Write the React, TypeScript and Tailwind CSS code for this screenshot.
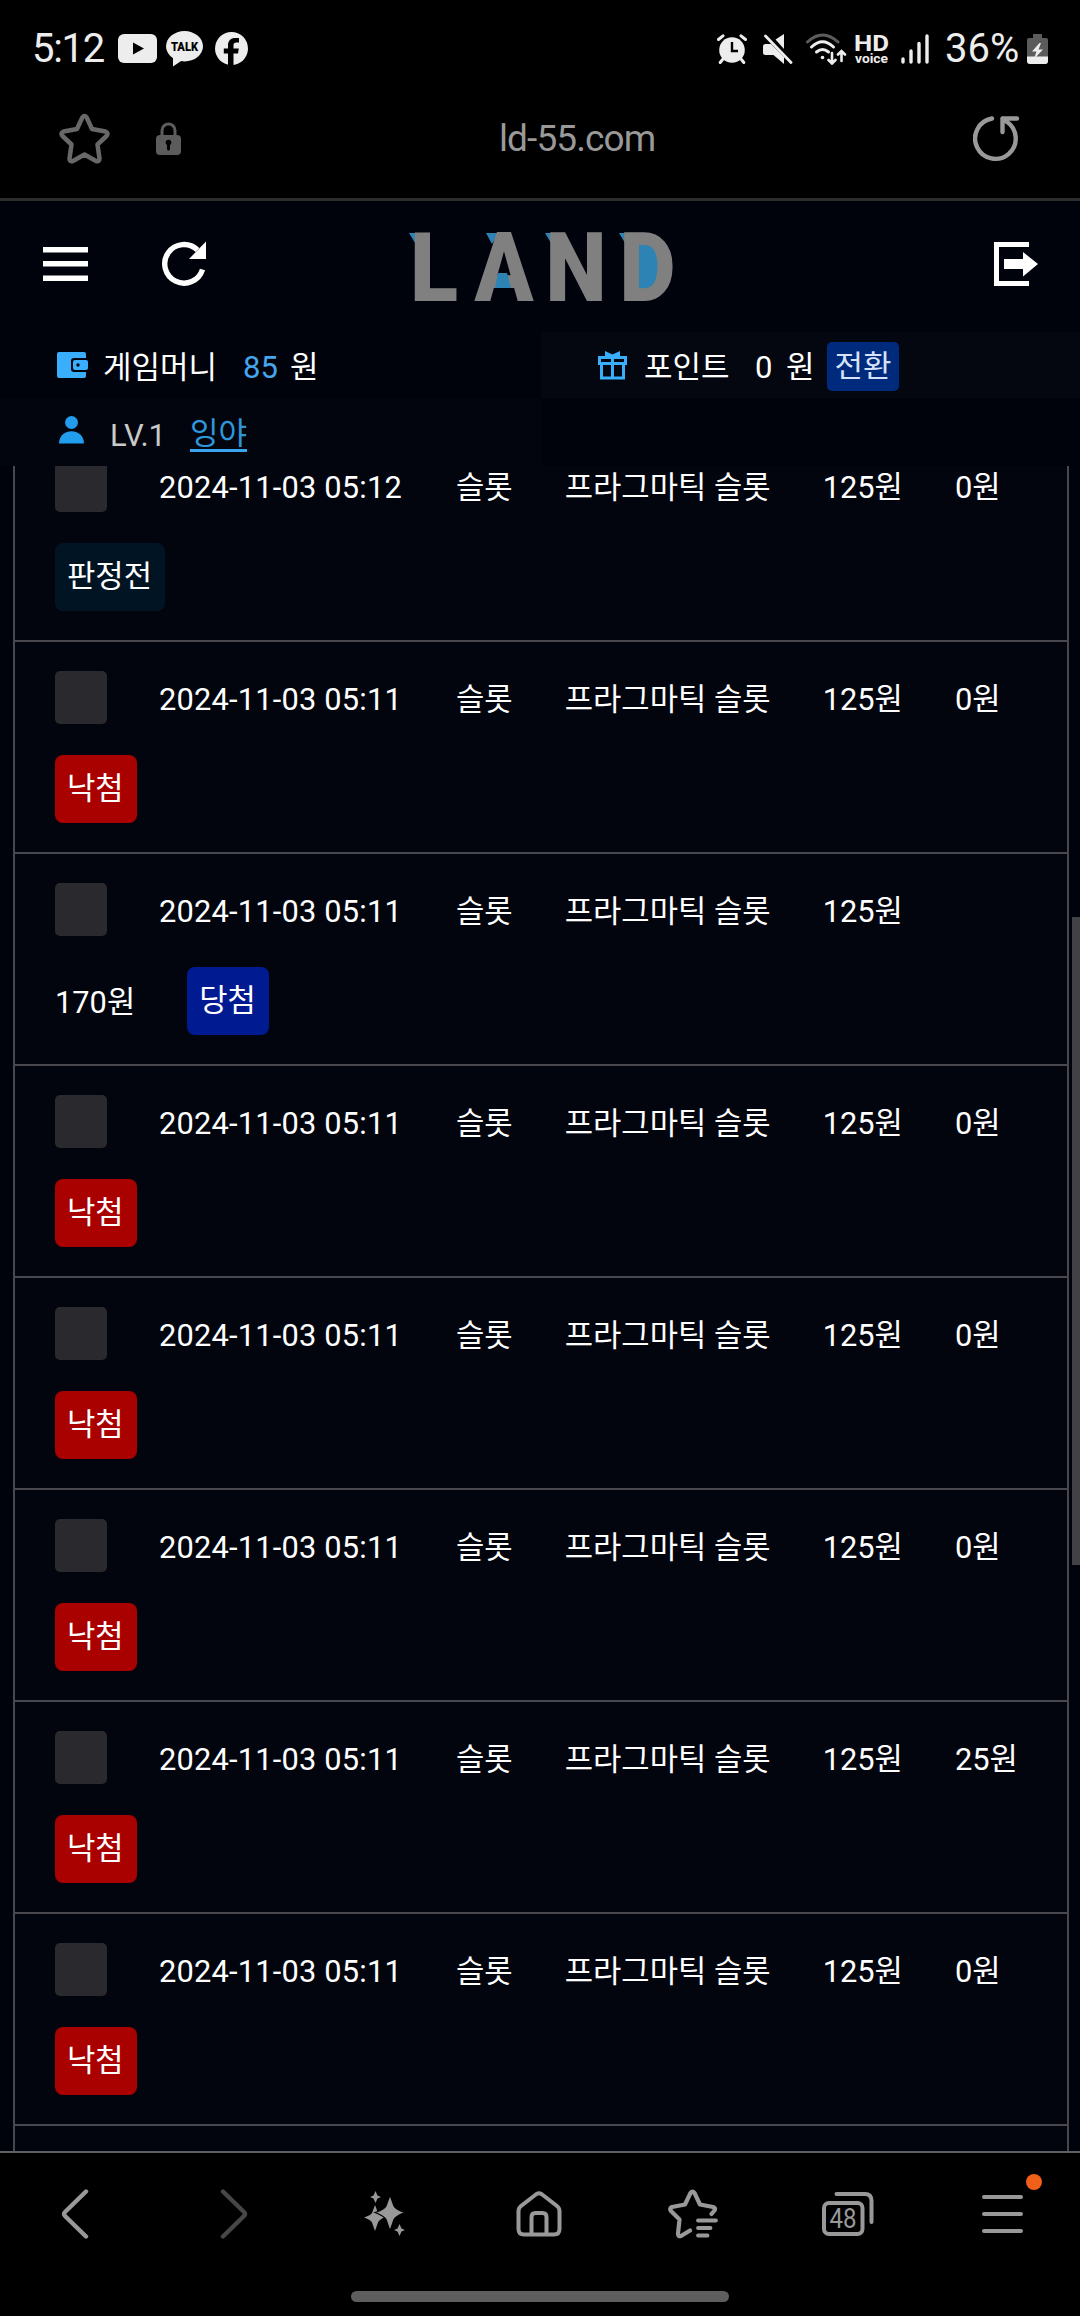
type Status = "wait" | "lose" | "win";

type Bet = {
    id: number;
    date: string;
    game: string;
    name: string;
    amount: string;
    prize: string;
    status: Status;
};

const bets: Bet[] = [
    { id: 1, date: "2024-11-03 05:12", game: "슬롯", name: "프라그마틱 슬롯", amount: "125원", prize: "0원", status: "wait" },
    { id: 2, date: "2024-11-03 05:11", game: "슬롯", name: "프라그마틱 슬롯", amount: "125원", prize: "0원", status: "lose" },
    { id: 3, date: "2024-11-03 05:11", game: "슬롯", name: "프라그마틱 슬롯", amount: "125원", prize: "170원", status: "win" },
    { id: 4, date: "2024-11-03 05:11", game: "슬롯", name: "프라그마틱 슬롯", amount: "125원", prize: "0원", status: "lose" },
    { id: 5, date: "2024-11-03 05:11", game: "슬롯", name: "프라그마틱 슬롯", amount: "125원", prize: "0원", status: "lose" },
    { id: 6, date: "2024-11-03 05:11", game: "슬롯", name: "프라그마틱 슬롯", amount: "125원", prize: "0원", status: "lose" },
    { id: 7, date: "2024-11-03 05:11", game: "슬롯", name: "프라그마틱 슬롯", amount: "125원", prize: "25원", status: "lose" },
    { id: 8, date: "2024-11-03 05:11", game: "슬롯", name: "프라그마틱 슬롯", amount: "125원", prize: "0원", status: "lose" },
];

const badges = {
    wait: { label: "판정전", color: "bg-[#001424]" },
    lose: { label: "낙첨", color: "bg-[#a90000]" },
    win: { label: "당첨", color: "bg-[#001a92]" },
};

const StatusBar = () => (
    <div className="flex h-[97px] items-center pl-8 pr-8 text-[#ededed]">
        <span className="w-[86px] whitespace-nowrap text-[40px] leading-none tracking-[-1.3px]">5:12</span>
        <svg className="mr-[9px]" width="39" height="29" viewBox="0 0 39 29">
            <rect width="39" height="29" rx="6" fill="currentColor" />
            <path d="M15 8.5 26 14.5 15 20.5Z" fill="#000" />
        </svg>
        <svg className="mr-3" width="37" height="36" viewBox="0 0 37 36">
            <ellipse cx="18.5" cy="15.3" rx="18.5" ry="15.2" fill="currentColor" />
            <path d="M7 26 7 35.5 18 28Z" fill="currentColor" />
            <text x="5" y="20" fontSize="12.5" fontWeight="900" textLength="27" lengthAdjust="spacingAndGlyphs" fill="#000">TALK</text>
        </svg>
        <svg width="33" height="33" viewBox="0 0 33 33">
            <circle cx="16.5" cy="16.5" r="16.5" fill="currentColor" />
            <path d="M13 33V21.5H8.8V16.5H13V13.5C13 8.6 15.8 6 20.2 6H24V10.5H21.5C19.3 10.5 18.5 11.8 18.5 13.6V16.5H23.8L23 21.5H18.5V33Z" fill="#000" />
        </svg>

        <svg className="ml-auto mr-4" width="30" height="30" viewBox="0 0 30 30" fill="none" stroke="currentColor">
            <circle cx="15" cy="16" r="12.8" fill="currentColor" stroke="none" />
            <path d="M1.5 5.5 6 1.8M28.5 5.5 24 1.8M6 25 3.2 28.5M24 25 26.8 28.5" strokeWidth="3" strokeLinecap="round" />
            <path d="M15 8V17H21" stroke="#000" strokeWidth="2.4" />
        </svg>
        <svg className="mr-3" width="30" height="30" viewBox="0 0 30 30">
            <path d="M0 12.5Q0 10 2.5 10H8L21 23V30L10.5 21H2.5Q0 21 0 18.5ZM12.5 5.5 21 0V15Z" fill="currentColor" />
            <path d="M2.5 2 28 28.5" stroke="currentColor" strokeWidth="2.8" strokeLinecap="round" />
        </svg>
        <svg className="mr-2" width="42" height="32" viewBox="0 0 42 32" fill="none" stroke="currentColor" strokeWidth="3" strokeLinecap="round">
            <path d="M2.5 9Q17.5-5 33 9" stroke="#5c5c5c" />
            <path d="M6.5 14Q17.5 3.5 28.5 14M11.5 19Q17.5 14 23.5 19" />
            <circle cx="17.5" cy="24.5" r="1.8" fill="currentColor" stroke="none" />
            <path d="M27 20V30M23.5 27 27 30.5 30.5 27M36.5 28V18.5M33 21.5 36.5 18 40 21.5" strokeWidth="2.6" />
        </svg>
        <svg className="mr-3 overflow-visible" width="34" height="30" viewBox="0 0 34 30" fill="currentColor" fontWeight="700">
            <text x="-1" y="17" fontSize="22" textLength="35" lengthAdjust="spacingAndGlyphs">HD</text>
            <text x="0" y="29" fontSize="13.5" textLength="33" lengthAdjust="spacingAndGlyphs">voice</text>
        </svg>
        <svg className="mr-4" width="28" height="30" viewBox="0 0 28 30" stroke="currentColor" strokeWidth="3.4" strokeLinecap="round">
            <path d="M2 25V28M10 17V28M18 9.5V28M26 2V28" />
        </svg>
        <span className="w-[82px] whitespace-nowrap text-[40px] leading-none">36%</span>
        <svg width="21" height="30" viewBox="0 0 21 30">
            <path d="M6 0H15V4H19Q21 4 21 6V27Q21 30 18 30H3Q0 30 0 27V6Q0 4 2 4H6Z" fill="#5b5b5b" />
            <path d="M0 22.5H21V27Q21 30 18 30H3Q0 30 0 27Z" fill="currentColor" />
            <path d="M12.5 9 5 17.5H9.5L7 25 16 15.5H11.5L14 9Z" fill="currentColor" />
        </svg>
    </div>
);

const AddressBar = () => (
    <div className="h-[104px] border-b-[3px] border-[#2c2c2c]">
        <div className="flex h-[82px] items-center pr-[60px] pl-[59px]">
            <svg width="51" height="51" viewBox="0 0 51 51" fill="none" stroke="#686868" strokeWidth="4.5" strokeLinejoin="round">
                <path d="M23.3 4.5Q25.5 1.5 27.7 4.5L33 16 46.5 18.5Q50 20 47.5 23L38.5 31.5 40.5 45.5Q40.5 49 37 48L25.5 41.5 14 48Q10.5 49 10.5 45.5L12.5 31.5 3.5 23Q1 20 4.5 18.5L18 16Z" />
            </svg>
            <svg className="ml-[46px]" width="25" height="33" viewBox="0 0 25 33">
                <path d="M6 15V8.5A6.5 6.5 0 0 1 19 8.5V15" fill="none" stroke="#5c5c5c" strokeWidth="3" />
                <rect y="13" width="25" height="20" rx="4" fill="#5c5c5c" />
                <path d="M12.5 20V27" stroke="#000" strokeWidth="3" strokeLinecap="round" />
                <circle cx="12.5" cy="20.5" r="2.8" fill="#000" />
            </svg>
            <span className="flex-1 pl-[318px] text-[37px] leading-none tracking-[-0.9px] text-[#999]">ld-55.com</span>
            <svg width="47" height="47" viewBox="0 0 47 47" fill="none" stroke="#999" strokeWidth="4.4" strokeLinecap="round" strokeLinejoin="round">
                <path d="M19 3.5A20.3 20.3 0 1 0 33.5 6.5" />
                <path d="M44 3.5H29.5V17M29.5 3.5 34 6.8" />
            </svg>
        </div>
    </div>
);

const Logo = () => (
    <svg className="overflow-visible" width="266" height="70" viewBox="0 0 266 70" fontFamily="Roboto" fontWeight="900" fontSize="95.6">
        <path d="M0 1H12L9 16ZM77 1H90L83 12ZM136 1H148L145 16ZM210 1H222L219 16Z" fill="#2c83b4" />
        <rect x="230" y="12" width="20" height="46" fill="#2c83b4" />
        <g fill="#808080">
            <text x="1" y="69" textLength="48" lengthAdjust="spacingAndGlyphs">L</text>
            <text x="65.5" y="69" textLength="59" lengthAdjust="spacingAndGlyphs">A</text>
            <text x="136.5" y="69" textLength="61" lengthAdjust="spacingAndGlyphs">N</text>
            <text x="210.5" y="69" textLength="56" lengthAdjust="spacingAndGlyphs">D</text>
        </g>
        <path d="M89 41H98L102 56H86Z" fill="#2c83b4" />
    </svg>
);

const Header = () => (
    <header>
        <div className="flex h-[131px] items-center justify-between pr-[42px] pb-[5px] pl-[43px]">
            <div className="flex items-center gap-[72px]">
                <svg width="45" height="34" viewBox="0 0 45 34" stroke="#fff" strokeWidth="5.5">
                    <path d="M0 2.8H45M0 16.8H45M0 31.2H45" />
                </svg>
                <svg width="47" height="46" viewBox="0 0 47 46">
                    <path d="M42.5 28.5A19.3 19.3 0 1 1 37.5 9" fill="none" stroke="#fff" strokeWidth="5.4" />
                    <path d="M46 .5V18H29Z" fill="#fff" />
                </svg>
            </div>
            <div className="pt-1.5 pr-[118px]">
                <Logo />
            </div>
            <svg width="44" height="44" viewBox="0 0 44 44">
                <path d="M35 2.5H2.5V41.5H35" fill="none" stroke="#fff" strokeWidth="5" />
                <path d="M10 17H29V10L44 22 29 34.5V27H10Z" fill="#fff" />
            </svg>
        </div>

        <div className="grid grid-cols-[541px_1fr] text-[31px] leading-none text-white">
            <div className="flex h-[66px] items-center pl-[57px]">
                <svg width="31" height="26" viewBox="0 0 31 26">
                    <rect width="29" height="26" rx="2" fill="#38aefc" />
                    <rect x="14" y="6" width="20" height="14" rx="3" fill="#00020c" />
                    <rect x="16" y="8" width="15" height="10" rx="2" fill="#38aefc" />
                    <circle cx="21" cy="13" r="1.7" fill="#00020c" />
                </svg>
                <span className="ml-[15px] w-[140px] pt-[5px]">게임머니</span>
                <span className="w-[47px] pt-[5px] text-[#45a6ee]">85</span>
                <span className="pt-[5px]">원</span>
            </div>
            <div className="flex h-[66px] items-center bg-[#04070f] pl-[57px]">
                <svg width="29" height="29" viewBox="0 0 29 29" fill="none" stroke="#38aefc" strokeWidth="3">
                    <path d="M1.5 6.5H27.5V12.5H1.5ZM3.5 12.5V27H25.5V12.5M14.5 6V27" />
                    <path d="M7 0 14.5 3.5 22 0V7H7Z" fill="#38aefc" stroke="none" />
                </svg>
                <span className="ml-[17px] w-[111px] pt-[5px]">포인트</span>
                <span className="w-[31px] pt-[5px]">0</span>
                <span className="w-[41px] pt-[5px]">원</span>
                <span className="mt-0.5 flex h-[49px] w-[72px] items-center justify-center rounded-[5px] bg-[#002b7c] text-[#d5e2fa]">전환</span>
            </div>
            <div className="flex h-[68px] items-center bg-[#02050d] pl-[59px]">
                <svg className="mb-1" width="25" height="28" viewBox="0 0 25 28" fill="#229cec">
                    <circle cx="12.5" cy="6.5" r="6.5" />
                    <path d="M0 27.5C0 11 25 11 25 27.5Z" />
                </svg>
                <span className="ml-[26px] w-[80px] pt-1.5 text-[#c9c9c9]">LV.1</span>
                <a href="#" className="mt-[5px] border-b-[3px] border-[#39a5f0] text-[#2f96dc]">잉야</a>
            </div>
        </div>
    </header>
);

const BetRow = ({ bet }: { bet: Bet }) => (
    <li className="flex h-[212px] flex-wrap content-start items-center gap-x-[52px] gap-y-[31px] border-b-2 border-[#47474d] pt-[29px] pr-9 pl-10">
        <span className="h-[53px] w-[52px] rounded-[5px] bg-[#2a292e]" />
        <span className="w-[245px] pt-[5px] tracking-[0.2px]">{bet.date}</span>
        <span className="pt-[5px]">{bet.game}</span>
        <span className="pt-[5px]">{bet.name}</span>
        <span className="pt-[5px]">{bet.amount}</span>
        <span className="pt-[5px]">{bet.prize}</span>
        <span className={`flex h-[68px] items-center rounded-lg pr-[13px] pl-3 ${badges[bet.status].color}`}>
            {badges[bet.status].label}
        </span>
    </li>
);

const NavBar = () => (
    <nav className="h-[165px] border-t-2 border-[#606065] bg-black">
        <div className="flex h-[122px] items-center pl-[61px]">
            <svg width="28" height="50" viewBox="0 0 28 50" fill="none" stroke="#999" strokeWidth="4.4" strokeLinecap="round">
                <path d="M25 2.5 4 23Q2 25 4 27L25 47.5" />
            </svg>
            <svg className="ml-[131px]" width="28" height="50" viewBox="0 0 28 50" fill="none" stroke="#474747" strokeWidth="4.4" strokeLinecap="round">
                <path d="M3 2.5 24 23Q26 25 24 27L3 47.5" />
            </svg>
            <svg className="ml-[116px]" width="41" height="46" viewBox="0 0 41 46" fill="#999">
                <path d="M11.5 0 13.5 4.5 17 6 13.5 7.5 11.5 12 9.5 7.5 6 6 9.5 4.5Z" />
                <path d="M11 14 14 22Q15 24 20 26.5 15 29 14 31.5L11 40 8 31.5Q7 29 0 26.5 7 24 8 22Z" />
                <path d="M26 4 30 15Q31.5 18.5 41 21.5 31.5 25 30 28.5L26 40 22 28.5Q20.5 25 11 21.5 20.5 18.5 22 15Z" stroke="#000" strokeWidth="1.2" />
                <path d="M35.5 33 37.5 37.5 41 39 37.5 40.5 35.5 45 33.5 40.5 30 39 33.5 37.5Z" />
            </svg>
            <svg className="ml-[111px]" width="46" height="46" viewBox="0 0 46 46" fill="none" stroke="#999" strokeWidth="4" strokeLinejoin="round">
                <path d="M2.5 20Q2.5 17 5 15L20.5 3Q23 1.5 25.5 3L41 15Q43.5 17 43.5 20V38Q43.5 43.5 38 43.5H8Q2.5 43.5 2.5 38Z" />
                <path d="M15.5 43V26Q15.5 22 19.5 22H26.5Q30.5 22 30.5 26V43" />
            </svg>
            <svg className="ml-[106px]" width="50" height="50" viewBox="0 0 50 50" fill="none" stroke="#999" strokeWidth="4.2" strokeLinecap="round" strokeLinejoin="round">
                <path d="M43.5 25 46.5 21.5Q48 19 45 18L32 15.5 26.5 4Q24.5 1 22.5 4L17 15.5 4 18Q1 19.5 3 22L11.5 30.5 10 44.5Q10 48 13 47L22 41.5" />
                <path d="M30 31.5H48M30 39H42.5M30 46.5H39.5" strokeWidth="3.8" />
            </svg>
            <svg className="ml-[104px]" width="52" height="46" viewBox="0 0 52 46" fill="none" stroke="#999" strokeWidth="4" strokeLinecap="round">
                <rect x="2" y="12" width="38.5" height="31" rx="5" />
                <path d="M14.5 3H43Q49.5 3 49.5 10V31" />
                <text x="7.5" y="37" fontSize="27" textLength="27" lengthAdjust="spacingAndGlyphs" fill="#999" stroke="none">48</text>
            </svg>
            <div className="relative ml-[108px]">
                <svg width="41" height="40" viewBox="0 0 41 40" stroke="#999" strokeWidth="4" strokeLinecap="round">
                    <path d="M2 3H39M2 20H39M2 37H39" />
                </svg>
                <span className="absolute -top-5 -right-[19px] size-4 rounded-full bg-[#f06018]" />
            </div>
        </div>
        <div className="mx-auto mt-4 h-[11px] w-[378px] rounded-full bg-[#5e5e5e]" />
    </nav>
);

const App = () => {
    return (
        <div className="flex h-[2316px] w-[1080px] flex-col overflow-hidden bg-black font-[Roboto,'Noto_Sans_CJK_KR',sans-serif]">
            <StatusBar />
            <AddressBar />
            <div className="relative flex h-[1950px] flex-col bg-[#00020c]">
                <Header />
                <div className="flex-1 overflow-hidden pr-[11px] pl-[13px]">
                    <ul className="-mt-[36px] h-[1721px] border-x-2 border-[#47474d] bg-[#02050d] text-[30.8px] leading-none text-white">
                        {bets.map((bet) => (
                            <BetRow key={bet.id} bet={bet} />
                        ))}
                    </ul>
                </div>
                <span className="absolute top-[716px] right-0 h-[648px] w-2 bg-[#424146]" />
            </div>
            <NavBar />
        </div>
    );
};

export default App;
